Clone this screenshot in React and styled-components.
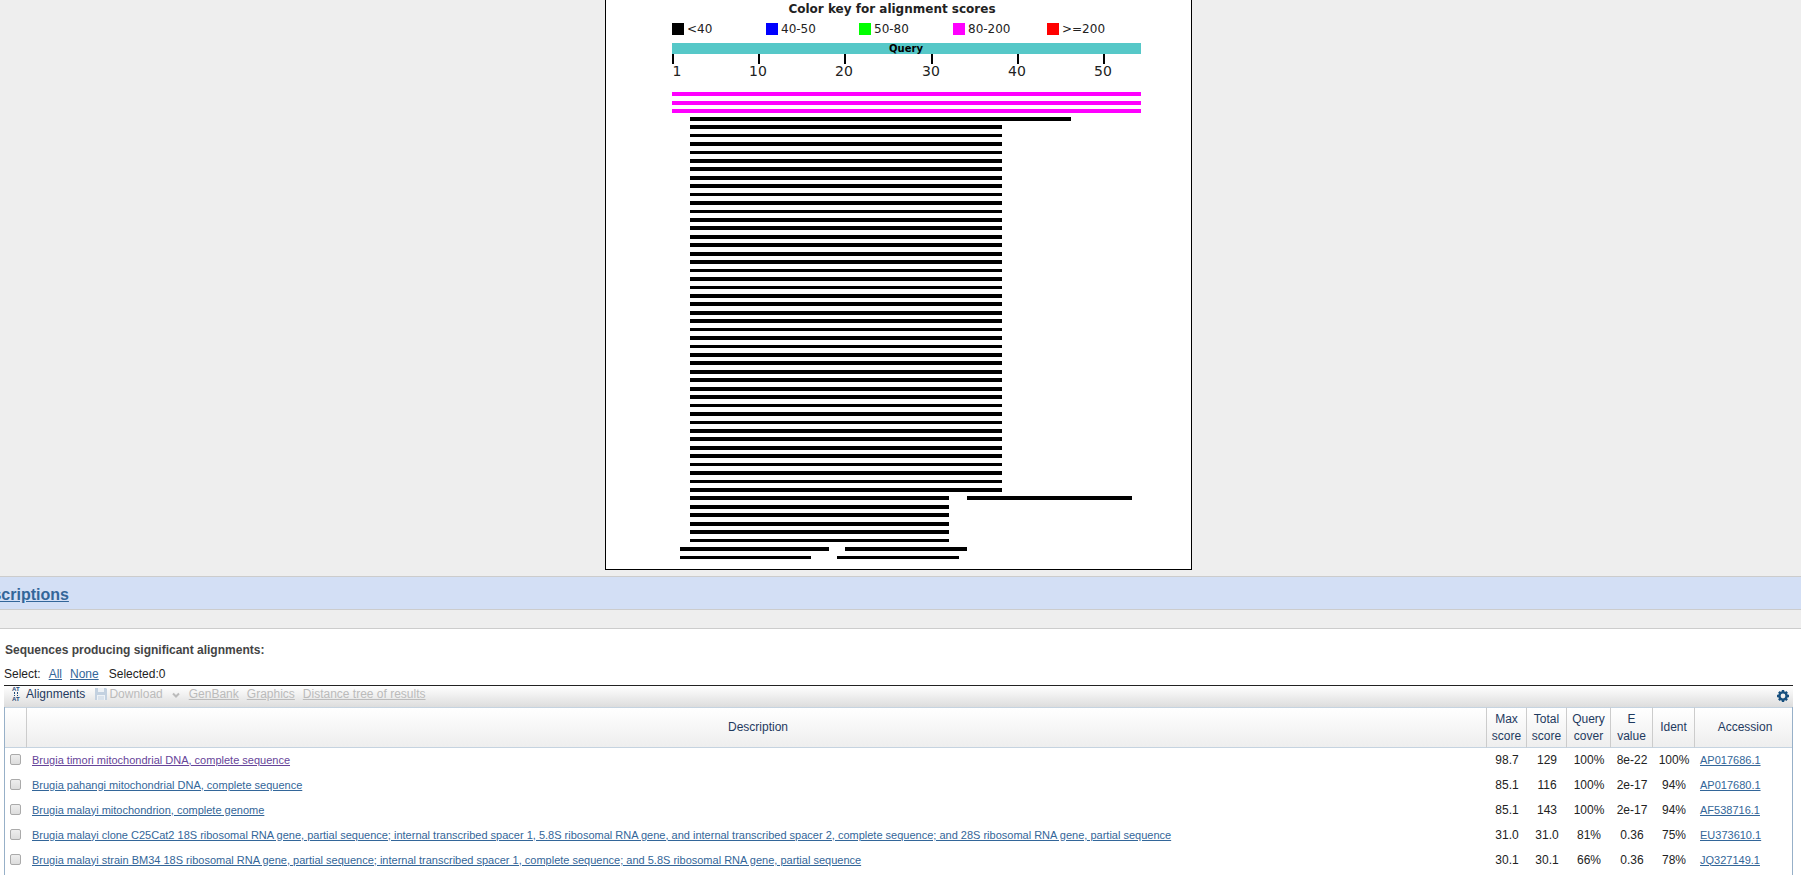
import styled, { createGlobalStyle } from "styled-components";

const GlobalStyle = createGlobalStyle`
  body {
    margin: 0;
    background-color: #eee;
    color: #222;
    font-family: "Liberation Sans", Arial, sans-serif;
    font-size: 12px;
    line-height: 16px;
    overflow-x: hidden;
  }
`;

const GraphicArea = styled.section`
  display: flex;
  justify-content: center;
  padding: 0 8px 6px 4px;
`;
const GraphicFrame = styled.div`
  border: 1px solid #000;
  border-top: none;
  background-color: #fff;
  svg {
    display: block;
  }
`;
const SectionBar = styled.h2`
  margin: 0 0 18px;
  padding: 8px 0 4px;
  border: 1px solid #ccc;
  border-width: 1px 0;
  background-color: #d3dff5;
  font-size: 16px;
  line-height: 20px;
  a {
    color: #369;
    margin-left: -28px;
  }
`;
const Results = styled.section`
  background-color: #fff;
  border-top: 1px solid #ccc;
  padding: 13px 8px 0 4px;
`;
const ResultsTitle = styled.h3`
  margin: 0 0 8px;
  padding-left: 1px;
  color: #444;
  font-size: 12px;
  line-height: 16px;
`;
const SelectRow = styled.div`
  display: flex;
  gap: 8px;
  height: 19px;
  a {
    color: #369;
  }
  span:last-child {
    margin-left: 2px;
  }
`;
const Toolbar = styled.div`
  display: flex;
  align-items: flex-start;
  gap: 8px;
  height: 21px;
  padding: 0 4px 0 7px;
  border-top: 1px solid #222;
  background: linear-gradient(#fff, #ddd);
`;
const ToolButton = styled.button`
  display: flex;
  align-items: center;
  gap: ${(props) => props.$gap || 0}px;
  margin: 0;
  padding: 0;
  border: none;
  background: none;
  font: inherit;
  color: #1f3a5f;
  &:disabled {
    margin-left: 2px;
    color: #bbb;
  }
`;
const ToolLink = styled.a`
  color: #bbb;
`;
const Settings = styled(ToolButton)`
  margin-left: auto;
  padding-top: 4px;
`;
const Grid = styled.div`
  border: 1px solid #97b0c8;
  border-width: 0 1px;
  padding-bottom: 2px;
`;
const HitTable = styled.table`
  width: 100%;
  table-layout: fixed;
  border-collapse: separate;
  border-spacing: 0;
`;
const HeadCell = styled.th`
  box-sizing: border-box;
  width: ${(props) => (props.$width ? props.$width + "px" : "auto")};
  height: 41px;
  padding: ${(props) => (props.$wide ? "0 0 0 3px" : "0")};
  border: 1px solid #c5d3e0;
  border-width: 1px 0;
  border-right: ${(props) => (props.$last ? "none" : "1px solid #ccc")};
  background: linear-gradient(#fff, #eee);
  color: #1f3a5f;
  font-weight: normal;
  line-height: 17px;
`;
const Cell = styled.td`
  box-sizing: border-box;
  height: 25px;
  padding: ${(props) => (props.$left ? "0 5px 2px" : "0 0 2px")};
  text-align: ${(props) => (props.$left ? "left" : "center")};
  white-space: nowrap;
`;
const HitLink = styled.a`
  color: ${(props) => (props.$visited ? "#649" : "#369")};
  font-size: 11px;
`;
const Tick = styled.input`
  appearance: none;
  box-sizing: border-box;
  display: block;
  width: 11px;
  height: 11px;
  margin: 0 0 0 5px;
  border: 1px solid #aaa;
  border-radius: 2px;
  background: linear-gradient(#eee, #ddd);
`;

const legend = [
  { x: 66, color: "#000", label: "<40" },
  { x: 160, color: "#00f", label: "40-50" },
  { x: 253, color: "#0f0", label: "50-80" },
  { x: 347, color: "#f0f", label: "80-200" },
  { x: 441, color: "#f00", label: ">=200" },
];

const ticks = [
  { x: 66, label: "1", labelX: 71 },
  { x: 152, label: "10", labelX: 152 },
  { x: 238, label: "20", labelX: 238 },
  { x: 325, label: "30", labelX: 325 },
  { x: 411, label: "40", labelX: 411 },
  { x: 497, label: "50", labelX: 497 },
];

const hitTops = [
  92, 101, 109, 117, 125, 134, 142, 151, 159, 167, 176, 184, 193, 201, 210,
  218, 226, 235, 243, 252, 260, 269, 277, 286, 294, 302, 311, 319, 328, 336,
  345, 353, 361, 370, 378, 387, 395, 404, 412, 421, 429, 437, 446, 454, 463,
  471, 480, 488, 496, 505, 513, 522, 530, 539, 547, 556,
];
const thinTops = [
  134, 151, 193, 210, 269, 286, 328, 345, 404, 421, 463, 480, 539, 556,
];

// [start, end] of each segment drawn on a line
function segmentsFor(line) {
  if (line < 3) return [[66, 535]];
  if (line === 3) return [[84, 465]];
  if (line < 48) return [[84, 396]];
  if (line === 48) return [[84, 343], [361, 526]];
  if (line < 54) return [[84, 343]];
  if (line === 54) return [[74, 223], [239, 361]];
  return [[74, 205], [231, 353]];
}

const hits = [
  {
    title: "Brugia timori mitochondrial DNA, complete sequence",
    scores: ["98.7", "129", "100%", "8e-22", "100%"],
    accession: "AP017686.1",
    visited: true,
  },
  {
    title: "Brugia pahangi mitochondrial DNA, complete sequence",
    scores: ["85.1", "116", "100%", "2e-17", "94%"],
    accession: "AP017680.1",
  },
  {
    title: "Brugia malayi mitochondrion, complete genome",
    scores: ["85.1", "143", "100%", "2e-17", "94%"],
    accession: "AF538716.1",
  },
  {
    title:
      "Brugia malayi clone C25Cat2 18S ribosomal RNA gene, partial sequence; internal transcribed spacer 1, 5.8S ribosomal RNA gene, and internal transcribed spacer 2, complete sequence; and 28S ribosomal RNA gene, partial sequence",
    scores: ["31.0", "31.0", "81%", "0.36", "75%"],
    accession: "EU373610.1",
  },
  {
    title:
      "Brugia malayi strain BM34 18S ribosomal RNA gene, partial sequence; internal transcribed spacer 1, complete sequence; and 5.8S ribosomal RNA gene, partial sequence",
    scores: ["30.1", "30.1", "66%", "0.36", "78%"],
    accession: "JQ327149.1",
  },
];

function AlignmentGraphic() {
  return (
    <svg
      width="585"
      height="569"
      fontFamily="'DejaVu Sans', sans-serif"
      fontSize="12"
      fill="#222"
      shapeRendering="crispEdges"
    >
      <text x="286" y="13" textAnchor="middle" fontWeight="bold">
        Color key for alignment scores
      </text>
      {legend.map((item) => (
        <g key={item.label}>
          <rect x={item.x} y="23" width="12" height="12" fill={item.color} />
          <text x={item.x + 15} y="33">{item.label}</text>
        </g>
      ))}
      <rect x="66" y="43" width="469" height="11" fill="#56c8c8" />
      <text x="300" y="52" textAnchor="middle" fontSize="10" fontWeight="bold" fill="#000">
        Query
      </text>
      {ticks.map((tick) => (
        <g key={tick.label}>
          <rect x={tick.x} y="54" width="2" height="10" fill="#000" />
          <text x={tick.labelX} y="76" textAnchor="middle" fontSize="14">
            {tick.label}
          </text>
        </g>
      ))}
      {hitTops.map((top, line) =>
        segmentsFor(line).map(([start, end]) => (
          <rect
            key={top + "-" + start}
            x={start}
            y={top}
            width={end - start}
            height={thinTops.includes(top) ? 3 : 4}
            fill={line < 3 ? "#f0f" : "#000"}
          />
        ))
      )}
    </svg>
  );
}

function AlignIcon() {
  return (
    <svg width="12" height="16" fill="#1f4a78" fontSize="6" fontWeight="bold">
      <text x="1" y="5">A</text>
      <text x="5" y="5">T</text>
      <path d="M3 6h1v2h-1zM3 9h1v1h-1zM6 6h1v2h-1zM6 9h1v1h-1z" />
      <text x="1" y="15">A</text>
      <text x="5" y="15">T</text>
    </svg>
  );
}

function DiskIcon() {
  return (
    <svg width="12" height="14">
      <path d="M0 1h11l1 1v11H0z" fill="#c3d1e0" />
      <path d="M3 1h6v4H3zM2 8h8v5H2z" fill="#eef2f6" />
      <path d="M3 10h6M3 12h6" stroke="#c3d1e0" />
    </svg>
  );
}

function GearIcon() {
  return (
    <svg width="12" height="12" viewBox="-6 -6 12 12" fill="none" stroke="#17507f">
      <circle r="3.6" strokeWidth="2.4" />
      <path
        d="M0-6v2M0 4v2M-6 0h2M4 0h2M-4.1-4.1l1.3 1.3M2.8 2.8l1.3 1.3M4.1-4.1l-1.3 1.3M-2.8 2.8l-1.3 1.3"
        strokeWidth="2.4"
      />
    </svg>
  );
}

export default function App() {
  return (
    <>
      <GlobalStyle />
      <GraphicArea>
        <GraphicFrame>
          <AlignmentGraphic />
        </GraphicFrame>
      </GraphicArea>
      <SectionBar>
        <a href="#descriptions">Descriptions</a>
      </SectionBar>
      <Results id="descriptions">
        <ResultsTitle>Sequences producing significant alignments:</ResultsTitle>
        <SelectRow>
          <span>Select:</span>
          <a href="#all">All</a>
          <a href="#none">None</a>
          <span>Selected:0</span>
        </SelectRow>
        <Toolbar>
          <ToolButton $gap={3}>
            <AlignIcon />
            Alignments
          </ToolButton>
          <ToolButton disabled $gap={2}>
            <DiskIcon />
            Download
            <svg width="16" height="16" fill="none" stroke="#bbb" strokeWidth="2">
              <path d="M8 7.5l3 3 3-3" />
            </svg>
          </ToolButton>
          <ToolLink href="#genbank">GenBank</ToolLink>
          <ToolLink href="#graphics">Graphics</ToolLink>
          <ToolLink href="#tree">Distance tree of results</ToolLink>
          <Settings aria-label="Settings">
            <GearIcon />
          </Settings>
        </Toolbar>
        <Grid>
          <HitTable>
            <thead>
              <tr>
                <HeadCell $width={22} />
                <HeadCell $wide>Description</HeadCell>
                <HeadCell $width={40}>Max<br />score</HeadCell>
                <HeadCell $width={40}>Total<br />score</HeadCell>
                <HeadCell $width={44}>Query<br />cover</HeadCell>
                <HeadCell $width={42}>E<br />value</HeadCell>
                <HeadCell $width={42}>Ident</HeadCell>
                <HeadCell $width={97} $wide $last>Accession</HeadCell>
              </tr>
            </thead>
            <tbody>
              {hits.map((hit) => (
                <tr key={hit.accession}>
                  <Cell>
                    <Tick type="checkbox" aria-label={hit.title} />
                  </Cell>
                  <Cell $left>
                    <HitLink href={"#" + hit.accession} $visited={hit.visited}>
                      {hit.title}
                    </HitLink>
                  </Cell>
                  {hit.scores.map((score, i) => (
                    <Cell key={i}>{score}</Cell>
                  ))}
                  <Cell $left>
                    <HitLink href={"#acc-" + hit.accession}>{hit.accession}</HitLink>
                  </Cell>
                </tr>
              ))}
            </tbody>
          </HitTable>
        </Grid>
      </Results>
    </>
  );
}
